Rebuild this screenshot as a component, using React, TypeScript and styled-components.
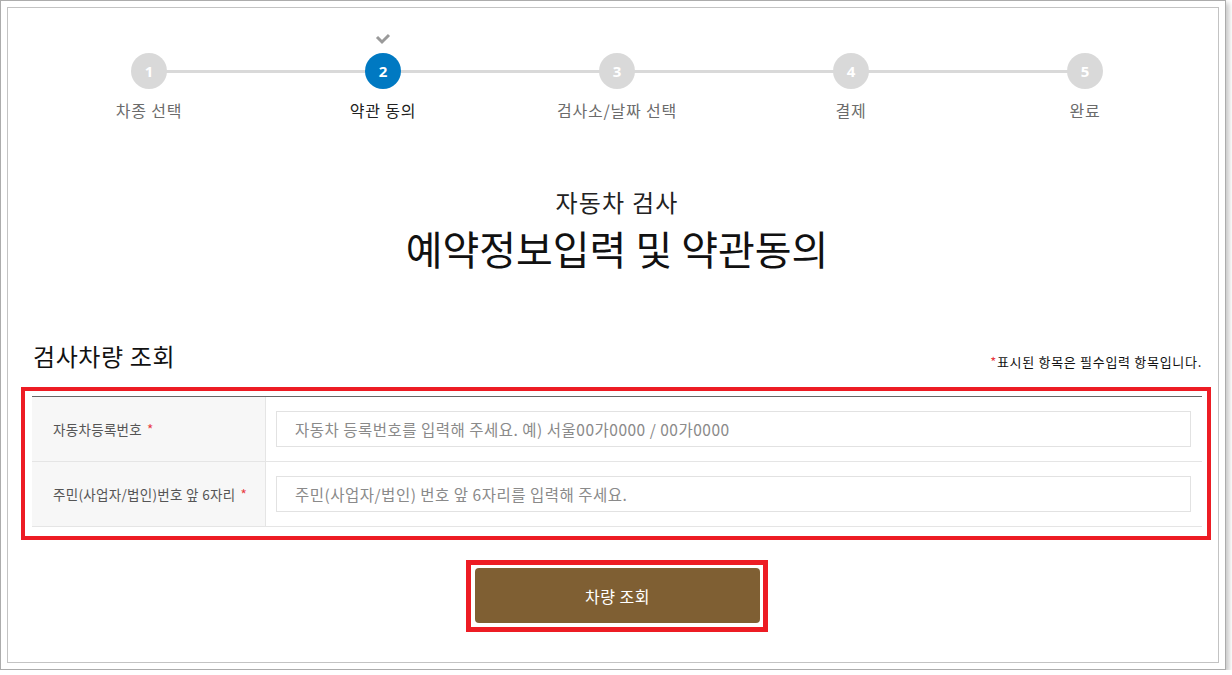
import styled, { createGlobalStyle } from "styled-components";

const GlobalStyle = createGlobalStyle`
  * {
    box-sizing: border-box;
  }
  body {
    margin: 0;
    background: #fff;
    font-family: "Noto Sans CJK KR", "Noto Sans", sans-serif;
  }
  ul {
    list-style: none;
    margin: 0;
    padding: 0;
  }
`;

const Frame = styled.div`
  width: 1226px;
  height: 670px;
  padding: 6px;
  border: 1px solid #acacac;
  box-shadow: 3px 3px 5px rgba(0, 0, 0, 0.22);
`;

const Inner = styled.div`
  height: 656px;
  border: 1px solid #c3c3c3;
  padding: 25px 16px 0 24px;
`;

const Steps = styled.ul`
  position: relative;
  display: grid;
  grid-template-columns: repeat(5, 234px);
  &::before {
    content: "";
    position: absolute;
    top: 37px;
    left: 117px;
    right: 117px;
    height: 3px;
    background: #d9d9d9;
  }
`;

const Step = styled.li`
  position: relative;
  display: flex;
  flex-direction: column;
  align-items: center;
`;

const CheckArea = styled.div`
  height: 20px;
  display: flex;
  align-items: flex-start;
  justify-content: center;
`;

const Circle = styled.span<{ $active?: boolean }>`
  width: 36px;
  height: 36px;
  border-radius: 50%;
  background: ${(p) => (p.$active ? "#0079c2" : "#d9d9d9")};
  color: #fff;
  display: flex;
  align-items: center;
  justify-content: center;
  font-family: "Open Sans", "Noto Sans", sans-serif;
  font-weight: 700;
  font-size: 15px;
`;

const StepLabel = styled.span<{ $active?: boolean }>`
  margin-top: 11px;
  font-size: 16px;
  line-height: 20px;
  letter-spacing: 0.8px;
  color: ${(p) => (p.$active ? "#222" : "#6b6b6b")};
`;

const TitleBlock = styled.div`
  margin-top: 67px;
  text-align: center;
`;

const SubTitle = styled.p`
  margin: 0;
  font-size: 24px;
  line-height: 30px;
  letter-spacing: 1.2px;
  color: #222;
`;

const MainTitle = styled.h1`
  margin: 7px 0 0;
  font-size: 40px;
  line-height: 48px;
  font-weight: 400;
  color: #111;
`;

const SectionHead = styled.div`
  margin-top: 68px;
  display: flex;
  justify-content: space-between;
  align-items: flex-end;
  height: 32px;
`;

const SectionTitle = styled.h2`
  margin: 0;
  font-size: 24px;
  line-height: 32px;
  letter-spacing: 0.6px;
  font-weight: 400;
  color: #111;
  padding-left: 1px;
`;

const Note = styled.p`
  margin: 0 0 1px;
  font-size: 13px;
  line-height: 18px;
  letter-spacing: 0.7px;
  color: #111;
  span {
    color: #e8383d;
  }
`;

const Highlight = styled.div`
  margin: 15px -9px 0 -11px;
  border: 4px solid #ed1c24;
  padding: 5px 5px 9px 7px;
`;

const Table = styled.div`
  border-top: 1px solid #666;
`;

const Row = styled.div`
  display: grid;
  grid-template-columns: 234px 1fr;
  height: 65px;
  border-bottom: 1px solid #e5e5e5;
`;

const LabelCell = styled.div`
  background: #f7f7f7;
  border-right: 1px solid #e5e5e5;
  display: flex;
  align-items: center;
  padding-left: 21px;
  font-size: 13.5px;
  letter-spacing: 0.3px;
  color: #555;
  em {
    font-style: normal;
    color: #e8383d;
    margin-left: 5px;
  }
`;

const InputCell = styled.div`
  display: flex;
  align-items: center;
  padding: 0 11px 0 10px;
`;

const TextInput = styled.input`
  width: 100%;
  height: 36px;
  border: 1px solid #e2e2e2;
  padding: 0 18px;
  font-family: "Noto Sans CJK KR", "Noto Sans", sans-serif;
  font-size: 15.5px;
  letter-spacing: 0.5px;
  color: #333;
  outline: none;
  &::placeholder {
    color: #8a8a8a;
  }
`;

const ButtonWrap = styled.div`
  display: flex;
  justify-content: center;
  margin-top: 20px;
`;

const ButtonHighlight = styled.div`
  border: 5px solid #ed1c24;
  padding: 3px 3px 4px 4px;
`;

const SearchButton = styled.button`
  width: 285px;
  height: 55px;
  border: none;
  border-radius: 4px;
  background: #7f5f33;
  color: #fff;
  font-family: "Noto Sans CJK KR", "Noto Sans", sans-serif;
  font-size: 16px;
  letter-spacing: 0.5px;
  cursor: pointer;
`;

const steps = ["차종 선택", "약관 동의", "검사소/날짜 선택", "결제", "완료"];
const current = 1;

function App() {
  return (
    <>
      <GlobalStyle />
      <Frame>
        <Inner>
          <Steps>
            {steps.map((label, i) => (
              <Step key={label}>
                <CheckArea>
                  {i === current && (
                    <svg width="16" height="12" viewBox="0 0 16 12">
                      <polyline
                        points="2,4 7,9 14,2"
                        fill="none"
                        stroke="#9a9a9a"
                        strokeWidth="3"
                      />
                    </svg>
                  )}
                </CheckArea>
                <Circle $active={i === current}>{i + 1}</Circle>
                <StepLabel $active={i === current}>{label}</StepLabel>
              </Step>
            ))}
          </Steps>

          <TitleBlock>
            <SubTitle>자동차 검사</SubTitle>
            <MainTitle>예약정보입력 및 약관동의</MainTitle>
          </TitleBlock>

          <SectionHead>
            <SectionTitle>검사차량 조회</SectionTitle>
            <Note>
              <span>*</span>표시된 항목은 필수입력 항목입니다.
            </Note>
          </SectionHead>

          <Highlight>
            <Table>
              <Row>
                <LabelCell>
                  자동차등록번호<em>*</em>
                </LabelCell>
                <InputCell>
                  <TextInput placeholder="자동차 등록번호를 입력해 주세요. 예) 서울00가0000 / 00가0000" />
                </InputCell>
              </Row>
              <Row>
                <LabelCell>
                  주민(사업자/법인)번호 앞 6자리<em>*</em>
                </LabelCell>
                <InputCell>
                  <TextInput placeholder="주민(사업자/법인) 번호 앞 6자리를 입력해 주세요." />
                </InputCell>
              </Row>
            </Table>
          </Highlight>

          <ButtonWrap>
            <ButtonHighlight>
              <SearchButton type="button">차량 조회</SearchButton>
            </ButtonHighlight>
          </ButtonWrap>
        </Inner>
      </Frame>
    </>
  );
}

export default App;
